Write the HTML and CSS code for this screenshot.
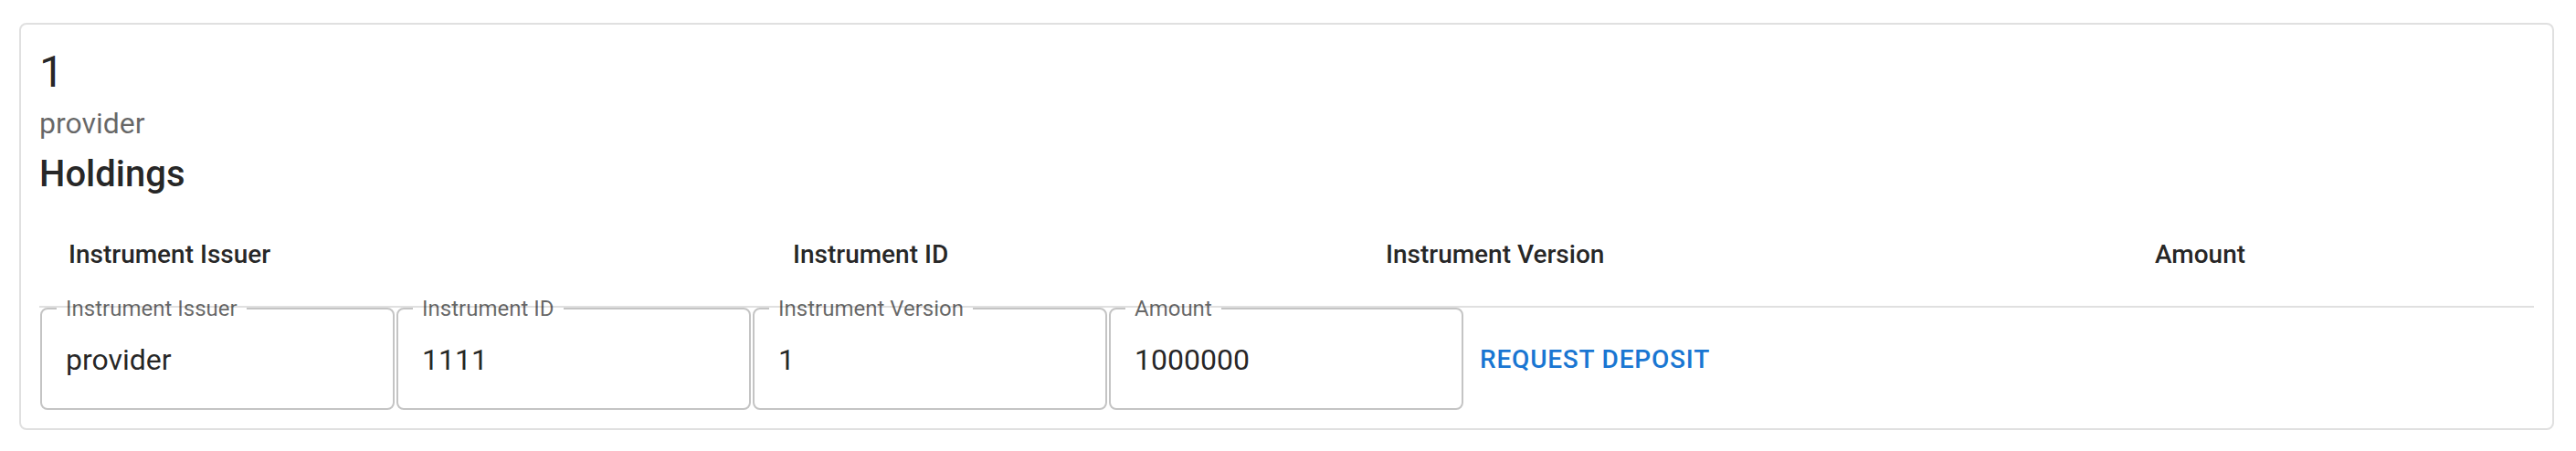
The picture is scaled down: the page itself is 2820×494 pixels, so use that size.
FILE: index.html
```html
<!DOCTYPE html>
<html lang="en">
<head>
<meta charset="utf-8">
<title>Holdings</title>
<link rel="stylesheet" href="styles.css">
</head>
<body>
  <div class="card">
    <div class="title">1</div>
    <div class="subtitle">provider</div>
    <div class="heading">Holdings</div>
    <div class="thead">
      <div class="th">Instrument Issuer</div>
      <div class="th">Instrument ID</div>
      <div class="th">Instrument Version</div>
      <div class="th">Amount</div>
    </div>
    <form class="row">
      <fieldset class="field">
        <legend class="label">Instrument Issuer</legend>
        <input class="input" type="text" value="provider">
      </fieldset>
      <fieldset class="field">
        <legend class="label">Instrument ID</legend>
        <input class="input" type="text" value="1111">
      </fieldset>
      <fieldset class="field">
        <legend class="label">Instrument Version</legend>
        <input class="input" type="text" value="1">
      </fieldset>
      <fieldset class="field">
        <legend class="label">Amount</legend>
        <input class="input" type="text" value="1000000">
      </fieldset>
      <button class="btn" type="button">Request Deposit</button>
    </form>
  </div>
</body>
</html>
```
FILE: styles.css
```css
html, body {
  background: #ffffff;
}
body {
  margin: 0;
  padding: 25px 24px 0 21px;
  font-family: Roboto, "Liberation Sans", Arial, sans-serif;
  color: rgba(0, 0, 0, 0.87);
}
.card {
  border: 2px solid #e0e0e0;
  border-radius: 8px;
  padding: 20px;
  background: #ffffff;
}
.title {
  font-size: 48px;
  line-height: 64px;
  font-weight: 400;
}
.subtitle {
  font-size: 32px;
  line-height: 48px;
  color: rgba(0, 0, 0, 0.6);
}
.heading {
  font-size: 40px;
  line-height: 64px;
  font-weight: 500;
}
.thead {
  display: grid;
  grid-template-columns: 793px 649px 842px 1fr;
  border-bottom: 2px solid #e0e0e0;
}
.th {
  padding: 32px;
  font-size: 28px;
  line-height: 48px;
  font-weight: 500;
  white-space: nowrap;
}
.row {
  display: flex;
  align-items: center;
  gap: 2px;
  padding-left: 1px;
  margin: 0;
}
.field {
  box-sizing: border-box;
  width: 388px;
  min-width: 0;
  margin: -11px 0 0 0;
  padding: 0 0 9px 0;
  border: 2px solid #c4c4c4;
  border-radius: 8px;
}
.label {
  margin-left: 16px;
  padding: 0 10px;
  font-size: 24px;
  line-height: 24px;
  color: rgba(0, 0, 0, 0.6);
}
.input {
  display: block;
  box-sizing: border-box;
  width: 100%;
  height: 88px;
  padding: 0 26px;
  border: none;
  outline: none;
  background: transparent;
  font-family: Roboto, "Liberation Sans", Arial, sans-serif;
  font-size: 32px;
  color: rgba(0, 0, 0, 0.87);
}
.btn {
  padding: 12px 16px;
  border: none;
  background: transparent;
  font-family: Roboto, "Liberation Sans", Arial, sans-serif;
  font-size: 28px;
  line-height: 49px;
  font-weight: 500;
  letter-spacing: 0.8px;
  text-transform: uppercase;
  color: #1976d2;
  cursor: pointer;
}
```
